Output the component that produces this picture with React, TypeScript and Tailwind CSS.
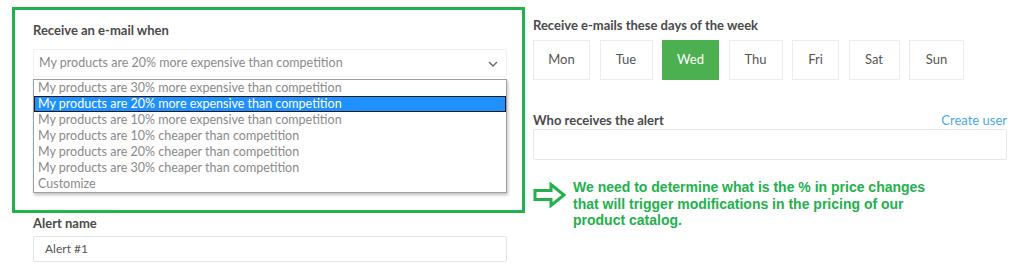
import React from "react";

const options = [
  "My products are 30% more expensive than competition",
  "My products are 20% more expensive than competition",
  "My products are 10% more expensive than competition",
  "My products are 10% cheaper than competition",
  "My products are 20% cheaper than competition",
  "My products are 30% cheaper than competition",
  "Customize",
];

const days = [
  { d: "Mon", w: "w-[57px]" },
  { d: "Tue", w: "w-[53px]" },
  { d: "Wed", w: "w-[57px]" },
  { d: "Thu", w: "w-[54px]" },
  { d: "Fri", w: "w-[47px]" },
  { d: "Sat", w: "w-[51px]" },
  { d: "Sun", w: "w-[55px]" },
];

export default function App() {
  return (
    <div className="w-[1030px] h-[274px] bg-white overflow-hidden flex font-['Lato','Open_Sans',sans-serif] text-[13px]">
      {/* Left column */}
      <div className="w-[521px] pl-[12px] pt-[7px] flex flex-col shrink-0">
        <div className="w-[513px] h-[206px] border-[3px] border-[#22b14c] pl-[18px] pr-[16px] pt-[12px] flex flex-col">
          <div className="h-[16px] leading-[16px] font-bold text-[#4a4a4a]">Receive an e-mail when</div>
          <div className="mt-[11px] h-[28px] w-[474px] border border-[#f0f0f0] rounded-[2px] flex items-center justify-between pl-[5px] pr-[8px] text-[12.5px] text-[#8a8a8a]">
            <span>My products are 20% more expensive than competition</span>
            <svg width="10" height="6" viewBox="0 0 10 6" className="mt-[2px]">
              <path d="M1 1 L5 5 L9 1" fill="none" stroke="#666" strokeWidth="1.4" />
            </svg>
          </div>
          <div className="mt-[2px] w-[474px] border border-[#a0a0a0] bg-white shadow-[1px_2px_3px_rgba(0,0,0,0.25)] flex flex-col text-[12.5px]">
            {options.map((o, i) =>
              i === 1 ? (
                <div key={o} className="h-[16px] leading-[14px] bg-[#1e90ff] text-white border border-[#1a1a1a] pl-[3px]">
                  {o}
                </div>
              ) : (
                <div key={o} className="h-[16px] leading-[16px] text-[#8a8a8a] pl-[4px]">
                  {o}
                </div>
              )
            )}
          </div>
        </div>
        <div className="pl-[21px] mt-[2px] h-[16px] leading-[16px] font-bold text-[#4a4a4a]">Alert name</div>
        <div className="ml-[21px] mt-[5px] h-[26px] w-[474px] border border-[#e3e3e3] rounded-[2px] flex items-center pl-[11px] text-[12px] text-[#555]">
          Alert #1
        </div>
      </div>

      {/* Right column */}
      <div className="ml-[12px] w-[474px] pt-[17px] flex flex-col">
        <div className="h-[16px] leading-[16px] font-bold text-[#4a4a4a]">Receive e-mails these days of the week</div>
        <div className="mt-[7px] flex gap-[9.5px]">
          {days.map(({ d, w }) =>
            d === "Wed" ? (
              <div key={d} className={`${w} h-[40px] bg-[#4caf50] border border-[#4caf50] flex items-center justify-center text-white`}>
                {d}
              </div>
            ) : (
              <div key={d} className={`${w} h-[40px] border border-[#ececec] flex items-center justify-center text-[#555]`}>
                {d}
              </div>
            )
          )}
        </div>
        <div className="mt-[32px] h-[16px] leading-[16px] flex justify-between">
          <span className="font-bold text-[#4a4a4a]">Who receives the alert</span>
          <span className="text-[#4aa8e8]">Create user</span>
        </div>
        <div className="mt-[1px] h-[31px] w-[474px] border border-[#e8e8e8] rounded-[2px]" />
        <div className="mt-[19px] flex">
          <svg width="34" height="26" viewBox="0 0 34 26" className="mt-[3px] shrink-0">
            <path d="M2 8.5 H18 V2.5 L31 13 L18 23.5 V17.5 H2 Z" fill="none" stroke="#22b14c" strokeWidth="3" strokeLinejoin="miter" />
          </svg>
          <div className="ml-[6px] font-['Liberation_Sans',Arial,sans-serif] font-bold text-[14px] leading-[16.5px] text-[#22b14c]">
            We need to determine what is the % in price changes
            <br />
            that will trigger modifications in the pricing of our
            <br />
            product catalog.
          </div>
        </div>
      </div>
    </div>
  );
}
